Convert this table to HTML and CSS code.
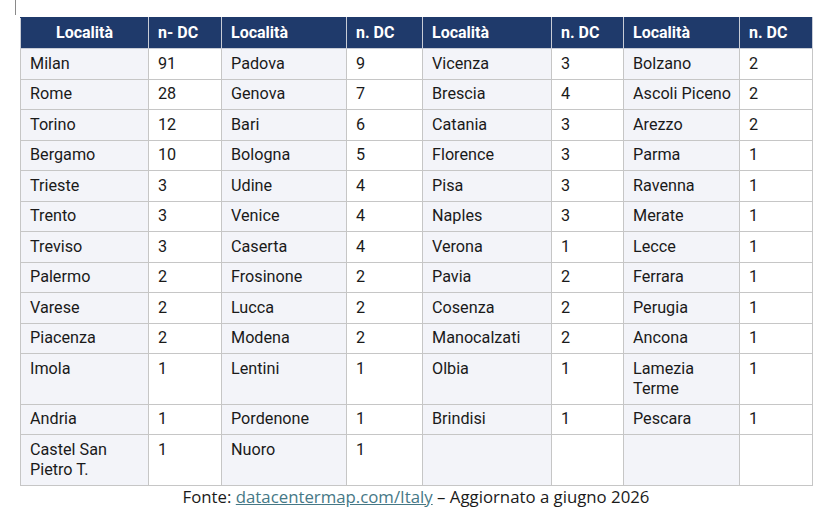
FILE: index.html
```html
<!DOCTYPE html>
<html lang="it">
<head>
<meta charset="utf-8">
<title>Data center in Italia</title>
<link rel="stylesheet" href="styles.css">
</head>
<body>
<span class="cursor"></span>
<div class="wrap">
<table class="dc">
<colgroup>
<col class="c1"><col class="c2"><col class="c3"><col class="c4"><col class="c5"><col class="c6"><col class="c7"><col class="c8">
</colgroup>
<thead>
<tr><th class="first">Località</th><th>n- DC</th><th>Località</th><th>n. DC</th><th>Località</th><th>n. DC</th><th>Località</th><th>n. DC</th></tr>
</thead>
<tbody>
<tr><td class="loc">Milan</td><td>91</td><td class="loc">Padova</td><td>9</td><td class="loc">Vicenza</td><td>3</td><td class="loc">Bolzano</td><td>2</td></tr>
<tr><td class="loc">Rome</td><td>28</td><td class="loc">Genova</td><td>7</td><td class="loc">Brescia</td><td>4</td><td class="loc">Ascoli Piceno</td><td>2</td></tr>
<tr><td class="loc">Torino</td><td>12</td><td class="loc">Bari</td><td>6</td><td class="loc">Catania</td><td>3</td><td class="loc">Arezzo</td><td>2</td></tr>
<tr><td class="loc">Bergamo</td><td>10</td><td class="loc">Bologna</td><td>5</td><td class="loc">Florence</td><td>3</td><td class="loc">Parma</td><td>1</td></tr>
<tr><td class="loc">Trieste</td><td>3</td><td class="loc">Udine</td><td>4</td><td class="loc">Pisa</td><td>3</td><td class="loc">Ravenna</td><td>1</td></tr>
<tr><td class="loc">Trento</td><td>3</td><td class="loc">Venice</td><td>4</td><td class="loc">Naples</td><td>3</td><td class="loc">Merate</td><td>1</td></tr>
<tr><td class="loc">Treviso</td><td>3</td><td class="loc">Caserta</td><td>4</td><td class="loc">Verona</td><td>1</td><td class="loc">Lecce</td><td>1</td></tr>
<tr><td class="loc">Palermo</td><td>2</td><td class="loc">Frosinone</td><td>2</td><td class="loc">Pavia</td><td>2</td><td class="loc">Ferrara</td><td>1</td></tr>
<tr><td class="loc">Varese</td><td>2</td><td class="loc">Lucca</td><td>2</td><td class="loc">Cosenza</td><td>2</td><td class="loc">Perugia</td><td>1</td></tr>
<tr><td class="loc">Piacenza</td><td>2</td><td class="loc">Modena</td><td>2</td><td class="loc">Manocalzati</td><td>2</td><td class="loc">Ancona</td><td>1</td></tr>
<tr><td class="loc">Imola</td><td>1</td><td class="loc">Lentini</td><td>1</td><td class="loc">Olbia</td><td>1</td><td class="loc">Lamezia<br>Terme</td><td>1</td></tr>
<tr><td class="loc">Andria</td><td>1</td><td class="loc">Pordenone</td><td>1</td><td class="loc">Brindisi</td><td>1</td><td class="loc">Pescara</td><td>1</td></tr>
<tr><td class="loc">Castel San<br>Pietro T.</td><td>1</td><td class="loc">Nuoro</td><td>1</td><td class="loc"></td><td></td><td class="loc"></td><td></td></tr>
</tbody>
</table>
<p class="caption">Fonte: <a href="#">datacentermap.com/Italy</a> – Aggiornato a giugno 2026</p>
</div>
</body>
</html>
```
FILE: styles.css
```css
html, body {
  margin: 0;
  padding: 0;
  background: #ffffff;
}

body {
  font-family: "Open Sans", "Liberation Sans", sans-serif;
  color: #1a1a1a;
  width: 837px;
  height: 517px;
  overflow: hidden;
  position: relative;
}

.cursor {
  position: absolute;
  left: 15px;
  top: 0;
  width: 1px;
  height: 15px;
  background: #8a8a8a;
}

.wrap {
  padding: 17px 0 0 20px;
  width: 792px;
}

.dc {
  border-collapse: collapse;
  table-layout: fixed;
  width: 792px;
  font-family: Roboto, "Liberation Sans", sans-serif;
  font-size: 16.2px;
}

.c1 { width: 128px; }
.c2 { width: 73px; }
.c3 { width: 125px; }
.c4 { width: 76px; }
.c5 { width: 129px; }
.c6 { width: 72px; }
.c7 { width: 116px; }
.c8 { width: 73px; }

.dc th {
  background: #1f3a6b;
  color: #ffffff;
  font-size: 16px;
  font-weight: 700;
  text-align: left;
  padding: 4.5px 9px 5.5px;
  line-height: 20px;
  border: 1px solid #c8ccd6;
  border-top-color: #1f3a6b;
}

.dc th.first {
  text-align: center;
}

.dc td {
  padding: 4.5px 8px 5px 9px;
  line-height: 20px;
  vertical-align: top;
  border: 1px solid #c6c6c6;
  background: #ffffff;
  color: #1a1a1a;
  white-space: nowrap;
}

.dc td.loc {
  background: #f3f4f9;
}

.caption {
  margin: 0;
  text-align: center;
  font-size: 16.8px;
  line-height: 22px;
  color: #1a1a1a;
}

.caption a {
  color: #467886;
  text-decoration: underline;
}
```
